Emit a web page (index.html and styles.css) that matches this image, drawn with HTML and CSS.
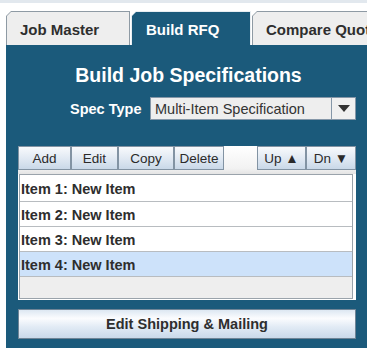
FILE: index.html
```html
<!DOCTYPE html>
<html>
<head>
<meta charset="utf-8">
<link rel="stylesheet" href="styles.css">
</head>
<body>
<div class="topline"></div>
<div class="tabs">
  <div class="tab tab-job"><div class="tab-inner">Job Master</div></div>
  <div class="tab tab-rfq selected"><div class="tab-inner">Build RFQ</div></div>
  <div class="tab tab-cmp"><div class="tab-inner">Compare Quotes</div></div>
</div>
<div class="panel">
  <div class="title">Build Job Specifications</div>
  <div class="spec-row">
    <span class="spec-label">Spec Type</span>
    <div class="select">
      <span class="select-text">Multi-Item Specification</span>
      <span class="select-arrow"><svg width="12" height="7" viewBox="0 0 12 7"><path d="M0 0 L12 0 L6 7 Z" fill="#333"/></svg></span>
    </div>
  </div>
  <div class="toolbar">
    <button class="btn w-add">Add</button><button class="btn w-edit">Edit</button><button class="btn w-copy">Copy</button><button class="btn w-del">Delete</button>
    <span class="spacer"></span>
    <button class="btn w-up">Up ▲</button><button class="btn w-dn">Dn ▼</button>
  </div>
  <div class="list-wrap">
    <div class="list">
      <div class="row">Item 1: New Item</div>
      <div class="row">Item 2: New Item</div>
      <div class="row">Item 3: New Item</div>
      <div class="row sel">Item 4: New Item</div>
      <div class="empty"></div>
    </div>
  </div>
  <button class="ship">Edit Shipping &amp; Mailing</button>
</div>
</body>
</html>
```
FILE: styles.css
```css
html, body {
  margin: 0;
  padding: 0;
  background: #ffffff;
  font-family: "Liberation Sans", Arial, sans-serif;
  overflow: hidden;
}
.topline {
  height: 3px;
  background: #e2e8ee;
}
.tabs {
  display: flex;
  margin-top: 8px;
  padding-left: 6px;
  height: 34px;
  white-space: nowrap;
  overflow: hidden;
}
.tab {
  flex: none;
  height: 34px;
  padding: 1px 1px 0 1px;
  box-sizing: border-box;
  background: #8e9aa4;
  clip-path: polygon(5px 0, 100% 0, 100% 100%, 0 100%, 0 5px);
  margin-right: 1px;
}
.tab-inner {
  height: 100%;
  box-sizing: border-box;
  background: #eeeeee;
  clip-path: polygon(4px 0, 100% 0, 100% 100%, 0 100%, 0 4px);
  font-weight: bold;
  font-size: 15px;
  color: #2e2e2e;
  padding-left: 13px;
  line-height: 36px;
}
.tab-job { width: 124px; }
.tab-rfq { width: 120px; }
.tab-rfq .tab-inner { padding-left: 14px; }
.tab-cmp { width: 140px; }
.tab.selected {
  background: #e8eef2;
}
.tab.selected .tab-inner {
  background: #1b5a7b;
  color: #ffffff;
}
.panel {
  margin-left: 6px;
  background: #1b5a7b;
  height: 304px;
  padding: 18px 11px 0 12px;
  box-sizing: border-box;
}
.title {
  text-align: center;
  color: #ffffff;
  font-weight: bold;
  font-size: 19.5px;
  line-height: 24px;
  padding-left: 3px;
}
.spec-row {
  display: flex;
  align-items: center;
  margin-top: 10px;
  padding-left: 52px;
  height: 23px;
}
.spec-label {
  color: #ffffff;
  font-weight: bold;
  font-size: 14.5px;
  width: 73px;
  margin-right: 7px;
}
.select {
  width: 206px;
  height: 23px;
  box-sizing: border-box;
  border: 1px solid #8597a8;
  background: #eeeeee;
  display: flex;
  align-items: center;
}
.select-text {
  flex: 1;
  font-size: 14.5px;
  color: #333333;
  padding-left: 4px;
}
.select-arrow {
  width: 23px;
  height: 21px;
  border-left: 1px solid #8597a8;
  display: flex;
  align-items: center;
  justify-content: center;
  background: #f0f0f0;
}
.toolbar {
  margin-top: 26px;
  height: 28px;
  display: flex;
  align-items: flex-start;
  background: linear-gradient(#ffffff, #f2f2f2 80%, #e4e4e4);
}
.spacer { flex: 1; }
.btn {
  height: 24px;
  box-sizing: border-box;
  border: 1px solid #8293a3;
  background: linear-gradient(#f8fafc, #dfe8f2 55%, #c9d8e8);
  font-family: "Liberation Sans", Arial, sans-serif;
  font-size: 13.5px;
  color: #2a2a2a;
  padding: 0;
  margin: 0;
  border-radius: 0;
}
.w-add { width: 53px; }
.w-edit { width: 47px; }
.w-copy { width: 56px; }
.w-del { width: 50px; }
.w-up { width: 49px; }
.w-dn { width: 50px; }
.list-wrap {
  background: #ffffff;
  padding: 0 3px 1px 1px;
  height: 126px;
  box-sizing: border-box;
}
.list {
  border: 1px solid #9aa3ab;
  height: 125px;
  box-sizing: border-box;
  background: #eeeeee;
}
.row {
  height: 25px;
  box-sizing: border-box;
  border-bottom: 1px solid #b8bcc0;
  background: #ffffff;
  font-weight: bold;
  font-size: 14.5px;
  color: #2e2e2e;
  line-height: 26px;
  padding-left: 1px;
}
.row:first-child { height: 27px; line-height: 29px; }
.row.sel { background: #cde2fa; }
.ship {
  display: block;
  margin-top: 9px;
  width: 338px;
  height: 30px;
  box-sizing: border-box;
  border: 1px solid #6f8496;
  background: linear-gradient(#dde7f2, #fbfcfe 30%, #e2ebf5 60%, #c9d9ea);
  font-family: "Liberation Sans", Arial, sans-serif;
  font-weight: bold;
  font-size: 14.5px;
  color: #2e2e2e;
  padding: 0;
  border-radius: 0;
}
```
